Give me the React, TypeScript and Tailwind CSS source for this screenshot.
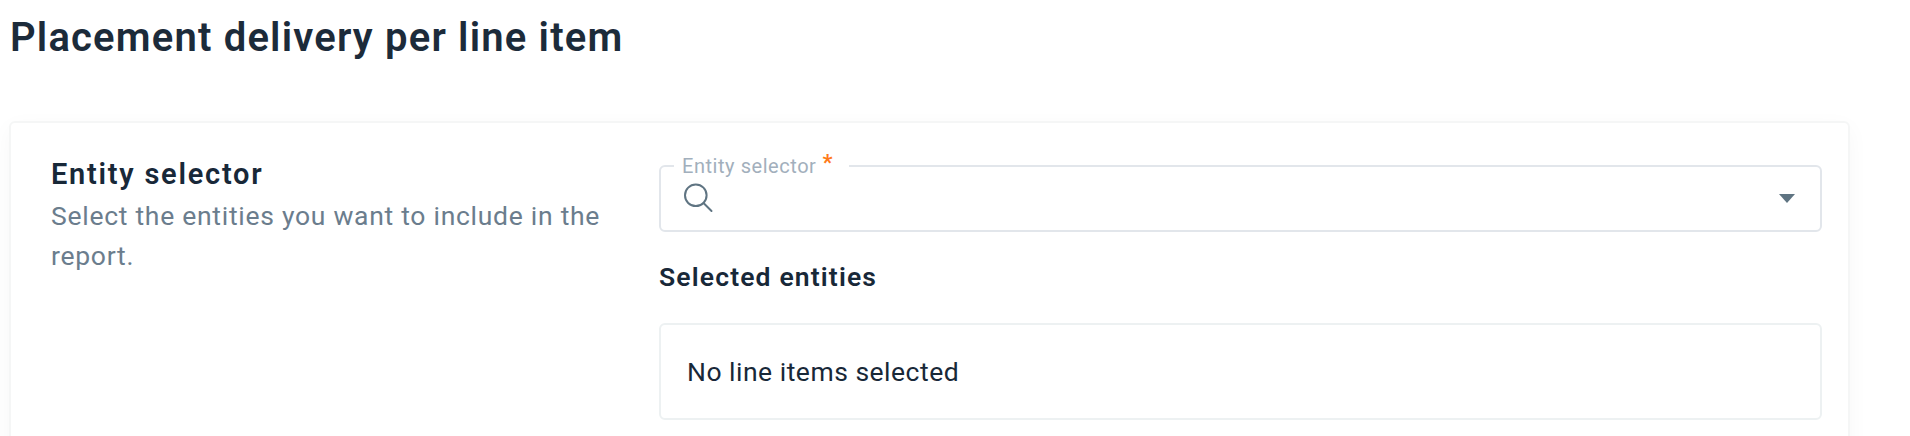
function SearchIcon() {
  return (
    <svg width="30" height="30" viewBox="0 0 30 30" fill="none" stroke="#5f7482" strokeWidth="2" strokeLinecap="round">
      <circle cx="12.8" cy="12.3" r="10.8" />
      <path d="M20.5 20L28.5 28" />
    </svg>
  );
}

function EntityField() {
  return (
    <fieldset className="h-[78px] min-w-0 rounded-md border-2 border-[#e2e6eb] pl-[13px] pr-[25px]">
      <legend className="flex h-6 w-[175px] pl-[8px] text-[20px] leading-6 text-[#a2afbc]">
        <span className="tracking-[0.55px]">Entity selector</span>
        <span className="-mt-[3px] ml-[6px] text-[22px] font-bold text-[#ff7a1a]">*</span>
      </legend>
      <div className="flex h-[42px] items-start justify-between pl-[9px] pt-[5px]">
        <SearchIcon />
        <svg className="mt-[11px]" width="16" height="9" viewBox="0 0 16 9" fill="#5f7482">
          <path d="M0 0H16L8 9Z" />
        </svg>
      </div>
    </fieldset>
  );
}

export default function App() {
  return (
    <div
      className="h-[436px] overflow-hidden bg-white pl-[9px] text-[#182838]"
      style={{ fontFamily: 'Roboto, "Liberation Sans", sans-serif' }}
    >
      <h1 className="h-[121px] pt-[14px] pl-px text-[40px] leading-[48px] font-semibold tracking-[1.18px] whitespace-nowrap text-[#1c2b3a]">
        Placement delivery per line item
      </h1>

      <section className="flex h-[500px] w-[1841px] rounded-md border-2 border-[#f5f6f6] bg-white shadow-[0_6px_22px_rgba(30,60,60,0.035)]">
        {/* Section description */}
        <div className="w-[648px] pt-[33px] pl-[40px]">
          <h2 className="text-[29px] leading-[36px] font-semibold tracking-[1.75px]">Entity selector</h2>
          <p className="mt-[4px] text-[26.5px] leading-[40px] tracking-[0.72px] whitespace-nowrap text-[#6b7d8d]">
            Select the entities you want to include in the
            <br />
            report.
          </p>
        </div>

        {/* Selection */}
        <div className="w-[1163px] pt-[31px]">
          <EntityField />
          <h3 className="mt-[27px] text-[26.5px] leading-[36px] font-semibold tracking-[1.15px]">Selected entities</h3>
          <div className="mt-[28px] flex h-[97px] items-center rounded-md border-2 border-[#edf1f2] pl-[26px] text-[26.5px] tracking-[0.5px]">
            No line items selected
          </div>
        </div>
      </section>
    </div>
  );
}
